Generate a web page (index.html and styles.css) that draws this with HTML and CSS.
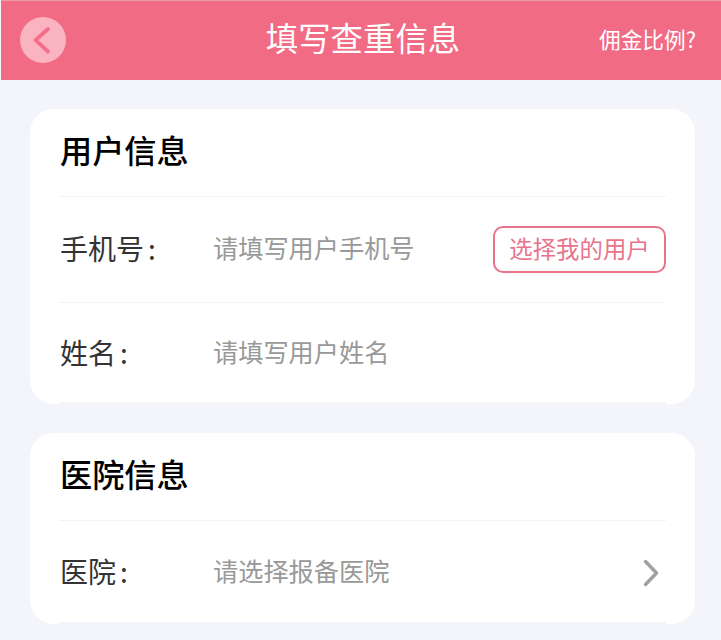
FILE: index.html
```html
<!DOCTYPE html>
<html lang="zh-CN">
<head>
  <meta charset="UTF-8" />
  <meta name="viewport" content="width=device-width, initial-scale=1.0"/>
  <title>填写查重信息</title>
  <link rel="stylesheet" href="styles.css">
</head>
<body>
  <div class="nav-bar">
    <div class="back-btn">
      <svg width="46" height="46" viewBox="0 0 46 46">
        <path d="M28 12 L15.5 23.2 L28 34.5" fill="none" stroke="#f56d87" stroke-width="3.8" stroke-linecap="round" stroke-linejoin="round"/>
      </svg>
    </div>
    <div class="nav-title">填写查重信息</div>
    <div class="nav-link">佣金比例?</div>
  </div>

  <div class="card">
    <div class="card-title">用户信息</div>
    <div class="form-row row-phone">
      <div class="form-label">手机号<span class="colon">:</span></div>
      <div class="form-value">请填写用户手机号</div>
      <div class="pick-btn">选择我的用户</div>
    </div>
    <div class="form-row row-name">
      <div class="form-label">姓名<span class="colon">:</span></div>
      <div class="form-value">请填写用户姓名</div>
    </div>
  </div>

  <div class="card">
    <div class="card-title">医院信息</div>
    <div class="form-row row-hospital">
      <div class="form-label">医院<span class="colon">:</span></div>
      <div class="form-value">请选择报备医院</div>
      <svg class="arrow" width="16" height="28" viewBox="0 0 16 28">
        <path d="M2.5 2.5 L13.5 14 L2.5 25.5" fill="none" stroke="#a0a0a0" stroke-width="3.4" stroke-linecap="round" stroke-linejoin="round"/>
      </svg>
    </div>
  </div>
</body>
</html>
```

FILE: styles.css
```css
* {
  box-sizing: border-box;
}

body {
  margin: 0;
  background-color: #f4f5fa;
  font-family: "Noto Sans CJK SC", "Noto Sans", sans-serif;
  height: 640px;
  overflow: hidden;
}

.nav-bar {
  height: 80px;
  margin-left: 1px;
  padding: 0 25px 0 18.5px;
  background-color: #f26b84;
  border-top: 1px solid #ea9aa8;
  display: flex;
  align-items: center;
  position: relative;
}

.back-btn {
  width: 46px;
  height: 46px;
  margin-bottom: 1px;
  border-radius: 50%;
  background-color: #fab3c1;
}

.back-btn svg {
  display: block;
}

.nav-title {
  position: absolute;
  left: 4px;
  right: 0;
  top: 14px;
  text-align: center;
  font-size: 32.4px;
  line-height: 44px;
  color: #fff;
}

.nav-link {
  margin-left: auto;
  margin-bottom: 4px;
  font-size: 21.7px;
  line-height: 28px;
  color: #fff;
}

.card {
  margin: 29px 26px 0 30px;
  padding: 0 29px;
  background-color: #fff;
  border-radius: 24px;
  position: relative;
}

/* the rows stop 2px short of the rounded corners */
.card::after {
  content: "";
  position: absolute;
  left: 29px;
  right: 29px;
  bottom: 0;
  height: 2px;
  background-color: #f4f5fa;
}

.card-title {
  height: 88px;
  padding: 18px 0 0 1px;
  font-size: 32.2px;
  line-height: 44px;
  font-weight: 500;
  color: #000;
  border-bottom: 1px solid #f2f2f7;
}

.form-row {
  display: flex;
  align-items: center;
}

.row-phone {
  height: 106px;
  border-bottom: 1px solid #f2f2f7;
}

.row-name {
  height: 101px;
}

.row-hospital {
  height: 103px;
}

.form-label {
  width: 154px;
  margin-bottom: 4px;
  padding-left: 1px;
  font-size: 28px;
  line-height: 40px;
  color: #333;
}

.colon {
  margin-left: 4px;
}

.form-value {
  flex: 1;
  margin-bottom: 5px;
  font-size: 25.2px;
  line-height: 34px;
  color: #999;
}

.pick-btn {
  width: 173px;
  height: 47px;
  border: 2px solid #e8748c;
  border-radius: 10px;
  font-size: 23.4px;
  line-height: 40px;
  text-align: center;
  color: #e8748c;
}

.arrow {
  margin-right: 7px;
}
```
